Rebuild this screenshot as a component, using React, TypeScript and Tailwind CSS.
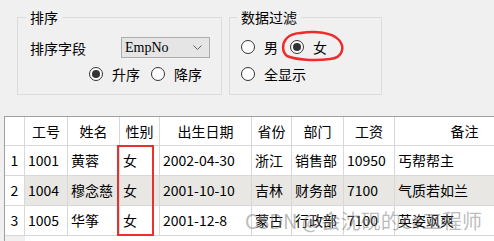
import React from "react";

const font = "font-['Noto_Sans_CJK_SC','Microsoft_YaHei',sans-serif]";

function Radio({ label, checked, className = "" }: { label: string; checked?: boolean; className?: string }) {
  return (
    <div className={`flex items-center h-[14px] ${className}`}>
      <span className="w-[14px] h-[14px] rounded-full border border-[#333333] bg-white flex items-center justify-center shrink-0">
        {checked && <span className="w-[8px] h-[8px] rounded-full bg-[#333333]" />}
      </span>
      <span className="ml-[9px] text-[14px] leading-[14px] text-black whitespace-nowrap">{label}</span>
    </div>
  );
}

const cols = ["工号", "姓名", "性别", "出生日期", "省份", "部门", "工资", "备注"];
const rows = [
  ["1001", "黄蓉", "女", "2002-04-30", "浙江", "销售部", "10950", "丐帮帮主"],
  ["1004", "穆念慈", "女", "2001-10-10", "吉林", "财务部", "7100", "气质若如兰"],
  ["1005", "华筝", "女", "2001-12-8", "蒙古", "行政部", "7100", "英姿飒爽"],
];

export default function App() {
  return (
    <div className={`relative w-[494px] h-[241px] overflow-hidden bg-[#f0f0f0] ${font}`}>
      <div className="flex pt-[7px] pl-[17px]">
        <fieldset className="w-[205px] h-[88px] min-w-0 border border-[#dcdcdc] p-0 m-0">
          <legend className="ml-[8px] px-[4px] text-[14px] leading-[20px]">排序</legend>
          <div className="flex items-center mt-[10px] pl-[12px] h-[21px]">
            <span className="w-[91px] text-[14px] leading-[14px]">排序字段</span>
            <div className="w-[89px] h-[21px] border border-[#adadad] bg-[#e5e5e5] flex items-center justify-between pl-[3px] pr-[7px]">
              <span className="font-['Liberation_Serif',serif] text-[14px] leading-[14px]">EmpNo</span>
              <svg width="9" height="5" viewBox="0 0 9 5">
                <path d="M0.5 0.5 L4.5 4.5 L8.5 0.5" fill="none" stroke="#606060" strokeWidth="1" />
              </svg>
            </div>
          </div>
          <div className="flex mt-[9px] pl-[71px]">
            <Radio label="升序" checked />
            <Radio label="降序" className="ml-[11px]" />
          </div>
        </fieldset>
        <fieldset className="ml-[7px] w-[153px] h-[88px] min-w-0 border border-[#dcdcdc] p-0 m-0">
          <legend className="ml-[7px] px-[4px] text-[14px] leading-[20px]">数据过滤</legend>
          <div className="flex mt-[13px] pl-[11px]">
            <Radio label="男" />
            <Radio label="女" checked className="ml-[12px]" />
          </div>
          <div className="flex mt-[13px] pl-[11px]">
            <Radio label="全显示" />
          </div>
        </fieldset>
      </div>

      <div className="mt-[21px] ml-[4px] border-t border-l border-[#a0a0a0] bg-white h-[125px]">
        <div className="grid grid-cols-[20px_43px_52px_40px_92px_40px_52px_51px_140px] text-[14px] text-black">
          <div className="h-[29px] border-r border-b border-[#d8d8d8]" />
          {cols.map((c) => (
            <div key={c} className="h-[29px] border-r border-b border-[#d8d8d8] flex items-center justify-center whitespace-nowrap">
              {c}
            </div>
          ))}
          {rows.map((r, i) => (
            <React.Fragment key={i}>
              <div className="h-[30px] border-r border-b border-[#d8d8d8] flex items-center justify-center">{i + 1}</div>
              {r.map((v, j) => (
                <div
                  key={j}
                  className={`h-[30px] border-r border-b border-[#d8d8d8] flex items-center pl-[3px] whitespace-nowrap overflow-hidden ${i === 1 ? "bg-[#e8e7e3]" : "bg-white"}`}
                >
                  {v}
                </div>
              ))}
            </React.Fragment>
          ))}
        </div>
        <div className="w-[20px] h-[10px] bg-[#f0f0f0]" />
      </div>

      {/* red markup over the screenshot */}
      <svg className="absolute left-0 top-0" width="494" height="241" viewBox="0 0 494 241">
        <path
          d="M300 33 C315 31 332 32 339 40 C345 47 343 58 330 59 C315 61 296 60 287 56 C282 52 282 44 286 39 C289 35 294 33 302 33"
          fill="none"
          stroke="#ee2c2c"
          strokeWidth="2.5"
          strokeLinecap="round"
        />
      </svg>
      <div className="absolute left-[117px] top-[145px] w-[37px] h-[91px] border-2 border-[#e8302f]" />
      <div className="absolute left-[245px] top-[208px] text-[20px] leading-[26px] text-[rgba(120,120,120,0.5)] whitespace-nowrap">
        CSDN @会沈砚的c#工程师
      </div>
    </div>
  );
}
